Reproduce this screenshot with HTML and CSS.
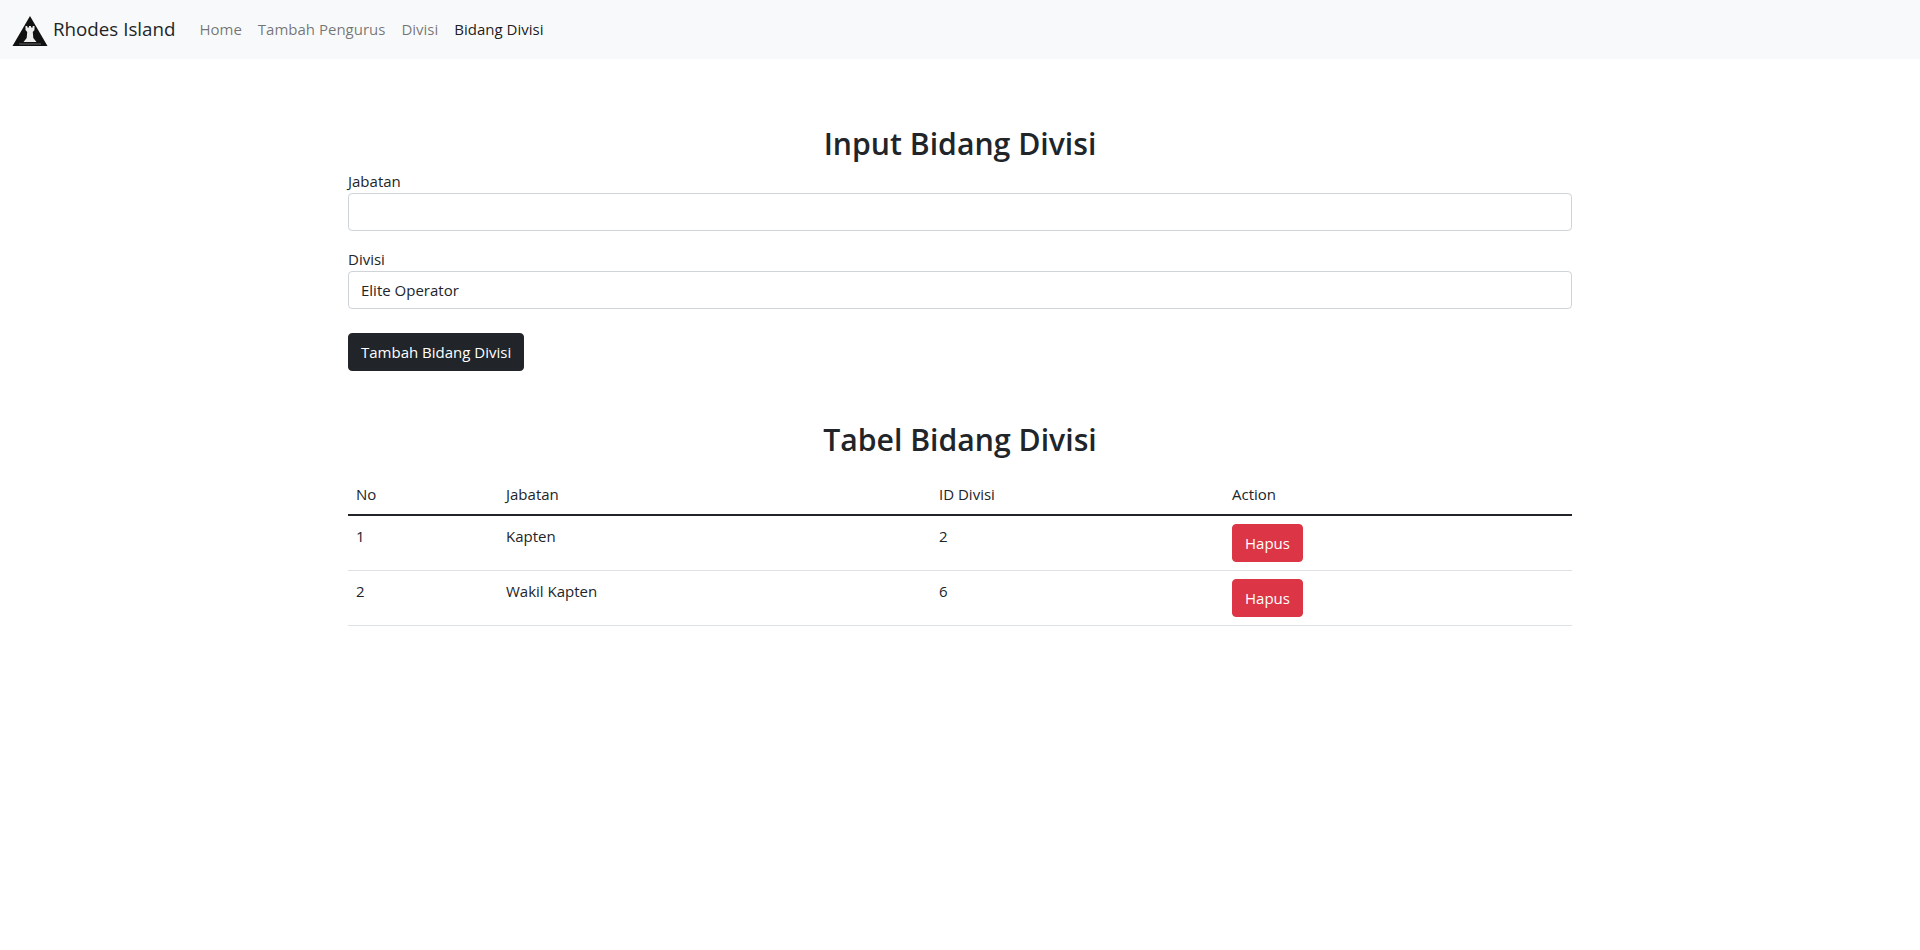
FILE: index.html
```html
<!DOCTYPE html>
<html lang="en">
<head>
  <meta charset="UTF-8">
  <title>Bidang Divisi</title>
  <link rel="stylesheet" href="styles.css">
</head>
<body>

  <nav class="navbar">
    <a class="brand" href="#">
      <svg class="brand-logo" viewBox="0 0 36 30" width="36" height="30">
        <path d="M18 0 L35.5 30 L0.5 30 Z" fill="#111"/>
        <path d="M13.5 10 L15.3 10 L15.3 11.5 L17 11.5 L17 10 L19 10 L19 11.5 L20.7 11.5 L20.7 10 L22.5 10 L22.5 14 L20.8 16 L21.3 22 L24.5 26 L11.5 26 L14.7 22 L15.2 16 L13.5 14 Z" fill="#eee"/>
        <path d="M7 28 L29 28" stroke="#666" stroke-width="1"/>
      </svg>
      <span>Rhodes Island</span>
    </a>
    <ul class="nav-list">
      <li><a class="nav-link" href="#">Home</a></li>
      <li><a class="nav-link" href="#">Tambah Pengurus</a></li>
      <li><a class="nav-link" href="#">Divisi</a></li>
      <li><a class="nav-link active" href="#">Bidang Divisi</a></li>
    </ul>
  </nav>

  <main class="container">
    <h2 class="title">Input Bidang Divisi</h2>
    <form>
      <div class="field">
        <label for="jabatan">Jabatan</label>
        <input type="text" id="jabatan" class="control">
      </div>
      <div class="field">
        <label for="divisi">Divisi</label>
        <select id="divisi" class="control">
          <option>Elite Operator</option>
        </select>
      </div>
      <button type="button" class="btn btn-dark">Tambah Bidang Divisi</button>
    </form>

    <h2 class="title title-table">Tabel Bidang Divisi</h2>
    <table class="table">
      <thead>
        <tr>
          <th class="col-no">No</th>
          <th class="col-jabatan">Jabatan</th>
          <th class="col-id">ID Divisi</th>
          <th>Action</th>
        </tr>
      </thead>
      <tbody>
        <tr>
          <td>1</td>
          <td>Kapten</td>
          <td>2</td>
          <td><button type="button" class="btn btn-danger">Hapus</button></td>
        </tr>
        <tr>
          <td>2</td>
          <td>Wakil Kapten</td>
          <td>6</td>
          <td><button type="button" class="btn btn-danger">Hapus</button></td>
        </tr>
      </tbody>
    </table>
  </main>

</body>
</html>
```

FILE: styles.css
```css
* {
  box-sizing: border-box;
}

body {
  margin: 0;
  font-family: "Open Sans", "Noto Sans", Arial, sans-serif;
  font-size: 15px;
  line-height: 24px;
  color: #212529;
  background: #fff;
}

.navbar {
  display: flex;
  align-items: center;
  height: 59px;
  padding: 0 12px 2px;
  background: #f8f9fa;
}

.brand {
  display: flex;
  align-items: center;
  gap: 5px;
  margin-right: 16px;
  font-size: 18.75px;
  color: #212529;
  text-decoration: none;
}

.brand-logo {
  margin-top: 5px;
}

.nav-list {
  display: flex;
  margin: 0;
  padding: 0;
  list-style: none;
}

.nav-link {
  display: block;
  padding: 8px;
  color: rgba(0, 0, 0, 0.55);
  text-decoration: none;
}

.nav-link.active {
  color: rgba(0, 0, 0, 0.9);
}

.container {
  width: 1224px;
  margin: 0 auto;
  padding-top: 66px;
}

.title {
  margin: 0 0 6px;
  font-size: 30.2px;
  line-height: 38px;
  font-weight: 600;
  text-align: center;
}

.title-table {
  margin-top: 50px;
  margin-bottom: 15px;
}

.field {
  margin-bottom: 16px;
}

.field label {
  display: block;
}

.control {
  display: block;
  width: 100%;
  height: 38px;
  padding: 6px 12px;
  font: inherit;
  color: #212529;
  background: #fff;
  border: 1px solid #ced4da;
  border-radius: 4px;
  appearance: none;
}

.btn {
  display: inline-block;
  height: 38px;
  padding: 6px 12px;
  font: inherit;
  color: #fff;
  border: 1px solid transparent;
  border-radius: 4px;
  cursor: pointer;
}

.btn-dark {
  margin-top: 8px;
  background: #212529;
  border-color: #212529;
}

.btn-danger {
  background: #dc3545;
  border-color: #dc3545;
}

.table {
  width: 100%;
  border-collapse: collapse;
}

.table th,
.table td {
  padding: 8px;
  text-align: left;
  font-weight: 400;
  vertical-align: top;
  border-bottom: 1px solid #dee2e6;
}

.table th {
  border-bottom: 2px solid #212529;
}

.col-no {
  width: 150px;
}

.col-jabatan {
  width: 433px;
}

.col-id {
  width: 293px;
}
```
